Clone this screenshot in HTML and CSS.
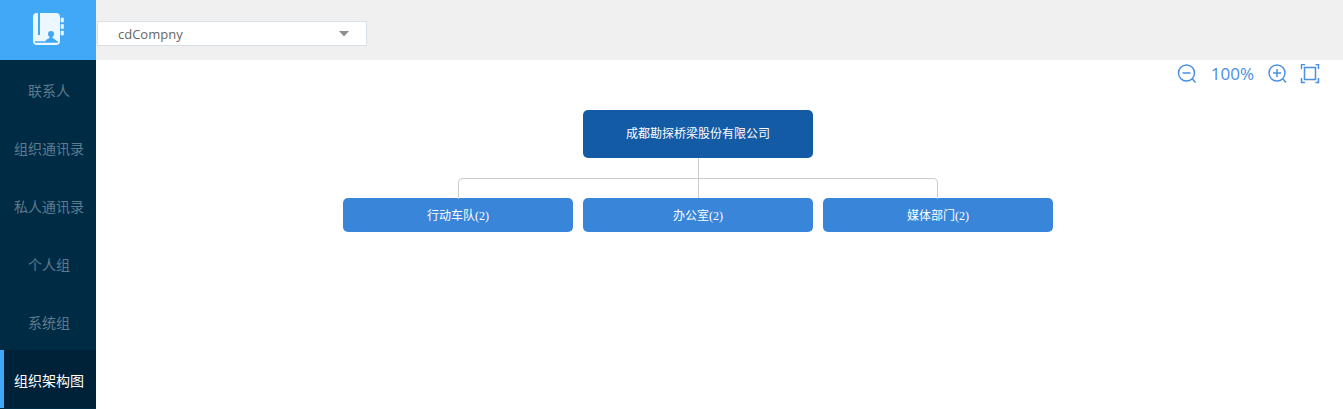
FILE: index.html
```html
<!DOCTYPE html>
<html lang="zh-CN">
<head>
<meta charset="utf-8">
<title>组织架构图</title>
<link rel="stylesheet" href="styles.css">
</head>
<body>
<div class="app">
  <aside class="sidebar">
    <div class="logo">
      <svg width="34" height="34" viewBox="0 0 34 34" aria-hidden="true">
        <rect x="1" y="1" width="27" height="32" rx="4" fill="#ecf7ff"/>
        <path d="M7 1v22" stroke="#3fa9f8" stroke-width="2"/>
        <path d="M3 30h23" stroke="#3fa9f8" stroke-width="1.500"/>
        <circle cx="19" cy="22" r="3" fill="#3fa9f8"/>
        <path d="M13 30c1-3 3-3 4.500-4v-2h3v2c1.500 1 3.500 1 4.500 4z" fill="#3fa9f8"/>
        <path d="M29 6h2.500v4H29zM29 12.500h2.500v4H29zM29 19h2.500v4H29z" fill="#ecf7ff" stroke="#ecf7ff" stroke-width=".6"/>
      </svg>
    </div>
    <nav class="menu">
      <a class="menu-item" href="#">联系人</a>
      <a class="menu-item" href="#">组织通讯录</a>
      <a class="menu-item" href="#">私人通讯录</a>
      <a class="menu-item" href="#">个人组</a>
      <a class="menu-item" href="#">系统组</a>
      <a class="menu-item active" href="#" aria-current="page">组织架构图</a>
    </nav>
  </aside>
  <main class="main">
    <header class="topbar">
      <div class="picker">
        <select class="picker-select" aria-label="公司">
          <option>cdCompny</option>
        </select>
        <svg class="picker-arrow" width="10" height="6" viewBox="0 0 10 6" aria-hidden="true"><path d="M0 0h10L5 5.500z" fill="#8e8e8e"/></svg>
      </div>
    </header>
    <div class="tools">
      <button class="tool" type="button" aria-label="缩小">
        <svg width="20" height="20" viewBox="0 0 20 20"><circle cx="9.500" cy="9" r="8"/><path d="M5.500 9h8M15.500 15l3 3.500"/></svg>
      </button>
      <span class="zoom">100%</span>
      <button class="tool" type="button" aria-label="放大">
        <svg width="20" height="20" viewBox="0 0 20 20"><circle cx="9" cy="9" r="8"/><path d="M5 9h8M9 5v8M15 15l3 3.500"/></svg>
      </button>
      <button class="tool" type="button" aria-label="适应屏幕">
        <svg width="20" height="20" viewBox="0 0 20 20"><path d="M4.500 3.500h11v12h-11zM1.500 5V.500H5M15.500.500h3V5M1.500 14v4.500H5M15.500 18.500h3V14"/></svg>
      </button>
    </div>
    <section class="chart">
      <div class="node root">成都勘探桥梁股份有限公司</div>
      <div class="stem"></div>
      <ul class="branches">
        <li class="branch"><div class="node">行动车队(2)</div></li>
        <li class="branch"><div class="node">办公室(2)</div></li>
        <li class="branch"><div class="node">媒体部门(2)</div></li>
      </ul>
    </section>
  </main>
</div>
</body>
</html>
```
FILE: styles.css
```css
* { box-sizing: border-box; }

body {
  margin: 0;
  background: #fff;
  font-family: "Open Sans", "Noto Sans CJK SC", sans-serif;
}

.app {
  display: flex;
  min-height: 100vh;
}

.sidebar {
  flex: 0 0 96px;
  background: #002b45;
}

.logo {
  display: flex;
  align-items: center;
  justify-content: center;
  height: 60px;
  padding: 0 0 2px 2px;
  background: #3fa9f8;
}

.menu {
  display: flex;
  flex-direction: column;
}

.menu-item {
  height: 58px;
  padding: 1px 0 0 2px;
  line-height: 58px;
  text-align: center;
  text-decoration: none;
  font-family: "Noto Sans CJK SC", sans-serif;
  font-size: 14px;
  color: #5e7b8d;
}

.menu-item.active {
  background: #002238;
  box-shadow: inset 4px 0 #3fa9f8;
  color: #fff;
}

.main {
  flex: 1;
  min-width: 0;
}

.topbar {
  display: flex;
  height: 60px;
  padding: 21px 1px 0;
  background: #f0f0f0;
}

.picker {
  position: relative;
  width: 270px;
  height: 25px;
}

.picker-select {
  width: 100%;
  height: 100%;
  padding: 0 30px 0 20px;
  appearance: none;
  border: 1px solid #d9e1e8;
  border-radius: 0;
  background: #fff;
  font-family: "Open Sans", sans-serif;
  font-size: 13px;
  color: #666;
}

.picker-arrow {
  position: absolute;
  top: 10px;
  right: 18px;
  pointer-events: none;
}

.tools {
  display: flex;
  align-items: center;
  justify-content: flex-end;
  gap: 12px;
  height: 28px;
  padding-right: 23px;
  color: #4a90e2;
}

.tool {
  display: flex;
  padding: 0;
  border: 0;
  background: none;
  color: inherit;
}

.tool svg {
  fill: none;
  stroke: currentColor;
  stroke-width: 1.5;
}

.zoom {
  margin: 0 2px;
  font-size: 17px;
  line-height: 26px;
}

.chart {
  display: flex;
  flex-direction: column;
  align-items: center;
  padding: 22px 43px 22px 0;
}

.node {
  width: 230px;
  height: 34px;
  border-radius: 5px;
  background: #3885da;
  color: #fff;
  font-family: "Liberation Serif", "Noto Sans CJK SC", serif;
  font-size: 12px;
  line-height: 36px;
  text-align: center;
}

.root {
  height: 48px;
  background: #145ba6;
  line-height: 48px;
}

.stem {
  width: 1px;
  height: 20px;
  background: #ccc;
}

.branches {
  display: flex;
  gap: 10px;
  margin: 0;
  padding: 0;
  list-style: none;
}

.branch {
  position: relative;
  padding-top: 20px;
}

/* connector lines from the shared rail down to each node */
.branch::before {
  content: "";
  position: absolute;
  top: 0;
  left: 50%;
  width: 1px;
  height: 20px;
  background: #ccc;
}

.branch:first-child::before,
.branch:last-child::before {
  width: calc(50% + 10px);
  border-top: 1px solid #ccc;
  background: none;
}

.branch:first-child::before {
  border-left: 1px solid #ccc;
  border-top-left-radius: 5px;
}

.branch:last-child::before {
  right: 50%;
  left: auto;
  border-right: 1px solid #ccc;
  border-top-right-radius: 5px;
}

.branch:nth-child(2)::after {
  content: "";
  position: absolute;
  top: 0;
  left: 0;
  width: 100%;
  height: 1px;
  background: #ccc;
}
```
